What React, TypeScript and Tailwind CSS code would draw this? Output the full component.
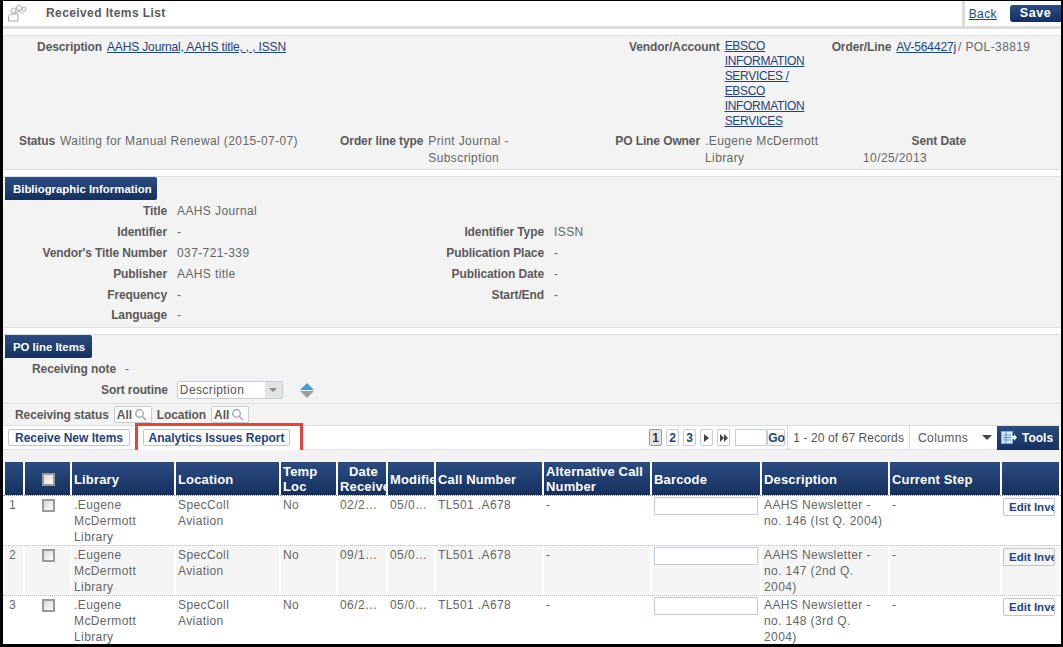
const font = { fontFamily: '"Liberation Sans", Arial, sans-serif' };

const tableCols = 'grid grid-cols-[18px_45px_102px_103px_55px_48px_46px_106px_106px_108px_126px_110px_57px] gap-x-[2px]';

const rows = [
  { n: '1', date: '02/2…', desc: ['AAHS Newsletter -', 'no. 146 (Ist Q. 2004)'] },
  { n: '2', date: '09/1…', desc: ['AAHS Newsletter -', 'no. 147 (2nd Q.', '2004)'] },
  { n: '3', date: '06/2…', desc: ['AAHS Newsletter -', 'no. 148 (3rd Q.', '2004)'] },
];

const bib = [
  ['Title', 'AAHS Journal', '', ''],
  ['Identifier', '-', 'Identifier Type', 'ISSN'],
  ["Vendor's Title Number", '037-721-339', 'Publication Place', '-'],
  ['Publisher', 'AAHS title', 'Publication Date', '-'],
  ['Frequency', '-', 'Start/End', '-'],
  ['Language', '-', '', ''],
];

const label = 'font-bold text-[#5a5a5a] tracking-[-0.1px] whitespace-nowrap';
const link = 'underline text-[#1f437c] h-fit';
const btn = 'h-[17px] border border-[#bfc6d0] rounded-[2px] text-center font-bold text-[#1f437c] leading-[16px] tracking-normal';

function Tab({ label, w }: { label: string; w: string }) {
  return (
    <div className={`${w} h-[23px] pl-[8px] flex items-center whitespace-nowrap rounded-tr-[2px] rounded-br-[2px] bg-gradient-to-b from-[#2b4c82] to-[#15305f] text-white text-[11.4px] font-bold tracking-normal`}>
      {label}
    </div>
  );
}

function SearchIcon() {
  return (
    <svg width="13" height="13" viewBox="0 0 13 13" fill="none" stroke="#8f9aa8" strokeWidth="1.2">
      <circle cx="5.5" cy="5.5" r="3.8" />
      <path d="M8.4 8.4 12 12" />
    </svg>
  );
}

function Check() {
  return <div className="w-[13px] h-[13px] border-2 border-[#9a9a9a] bg-gradient-to-br from-[#d8d8d8] to-white" />;
}

function Filter() {
  return (
    <div className="w-[38px] h-[17px] bg-white border border-[#c5ccd6] rounded-[2px] flex items-center pl-[2px] gap-[2px] font-bold text-[#5a5a5a] tracking-normal">
      All <SearchIcon />
    </div>
  );
}

function Pager({ t, active }: { t: React.ReactNode; active?: boolean }) {
  return (
    <div className={`w-[13px] h-[17px] flex items-center justify-center border rounded-[2px] text-[12px] font-bold ${active ? 'border-[#999] bg-[#e4e4e4] text-[#333]' : 'border-[#c5ccd6] bg-white text-[#1f437c]'}`}>
      {t}
    </div>
  );
}

export default function App() {
  return (
    <div style={font} className="w-[1063px] h-[647px] overflow-hidden bg-black pt-px pl-[3px] pr-[2px] pb-[3px] text-[12px] leading-[16px] tracking-[0.4px] text-[#666]">
      <div className="h-full bg-white overflow-hidden flex flex-col">
        {/* top bar */}
        <div className="h-[25px] shrink-0 flex items-center">
          <svg width="20" height="20" viewBox="0 0 20 20" fill="none" stroke="#a8a8a8" strokeWidth="1" className="ml-[4px] -mt-[2px]">
            <circle cx="12" cy="5" r="2.5" />
            <circle cx="17" cy="6" r="2" />
            <path d="M8 11c0-3 8-3 8 0M1.5 18v-4c0-2 2-3 3.500-3h6v7z" />
            <circle cx="6.500" cy="7.500" r="2.500" />
          </svg>
          <span className="ml-[19px] -mt-[2px] font-bold text-[#5a5a5a] whitespace-nowrap">Received Items List</span>
          <div className="ml-auto h-full flex items-center border-l-[3px] border-[#dcdcdc] pl-[4px]">
            <a className="underline text-[#1f437c]">Back</a>
            <div className="ml-[13px] w-[51px] h-[17px] rounded-l-[3px] bg-gradient-to-b from-[#2b4c82] to-[#15305f] text-white font-bold text-center text-[12.5px] tracking-[0.6px]">Save</div>
          </div>
        </div>
        <div className="h-[3px] shrink-0 bg-[#dcdcdc]" />

        {/* order summary */}
        <div className="mt-[6px] h-[135px] shrink-0 bg-[#f3f3f3] border-y border-[#dedede] pt-[3px]">
          <div className="flex h-[90px]">
            <b className={`w-[99px] text-right ${label}`}>Description</b>
            <a className={`ml-[5px] w-[522px] tracking-[-0.15px] ${link}`}>AAHS Journal, AAHS title, , , ISSN</a>
            <b className={label}>Vendor/Account</b>
            <a className={`ml-[5px] w-[107px] leading-[15px] tracking-[-0.3px] ${link}`}>EBSCO<br />INFORMATION<br />SERVICES /<br />EBSCO<br />INFORMATION<br />SERVICES</a>
            <b className={label}>Order/Line</b>
            <a className={`ml-[5px] tracking-[-0.15px] ${link}`}>AV-564427j</a>
            <span className="ml-[2px]">/ POL-38819</span>
          </div>
          <div className="flex mt-[4px] leading-[17px]">
            <b className={`ml-[16px] ${label}`}>Status</b>
            <span className="ml-[5px] w-[280px]">Waiting for Manual Renewal (2015-07-07)</span>
            <b className={label}>Order line type</b>
            <span className="ml-[5px] w-[187px]">Print Journal -<br />Subscription</span>
            <b className={label}>PO Line Owner</b>
            <span className="ml-[5px] w-[130px]">.Eugene McDermott Library</span>
            <div className="w-[131px] flex flex-col">
              <b className={`text-right ${label}`}>Sent Date</b>
              <span className="ml-[28px]">10/25/2013</span>
            </div>
          </div>
        </div>

        {/* bibliographic */}
        <div className="mt-[6px] h-[152px] shrink-0 bg-[#f3f3f3] border-y border-[#dedede]">
          <div className="pl-[2px]"><Tab label="Bibliographic Information" w="w-[152px]" /></div>
          <div className="mt-px grid grid-cols-[164px_247px_110px_1fr] gap-x-[10px] auto-rows-[20.8px] items-center">
            {bib.map((r) => (
              <div key={r[0]} className="contents">
                <b className={`text-right ${label}`}>{r[0]}</b>
                <span>{r[1]}</span>
                <b className={`text-right ${label}`}>{r[2]}</b>
                <span>{r[3]}</span>
              </div>
            ))}
          </div>
        </div>

        {/* PO line items */}
        <div className="mt-[6px] shrink-0 bg-[#f3f3f3] border-t border-[#dedede]">
          <div className="pl-[2px]"><Tab label="PO line Items" w="w-[87px]" /></div>
          <div className="mt-[3px] flex h-[16px] items-center">
            <b className={`ml-[29px] ${label}`}>Receiving note</b>
            <span className="ml-[9px]">-</span>
          </div>
          <div className="mt-[3px] flex h-[24px] items-center border-b border-[#dedede] pb-[3px]">
            <b className={`ml-[98px] ${label}`}>Sort routine</b>
            <div className="ml-[9px] w-[106px] h-[18px] flex bg-white border border-[#c5ccd6] rounded-[2px] text-[#555]">
              <span className="pl-[2px] flex-1 leading-[16px]">Description</span>
              <div className="w-[17px] bg-[#e4e4e4] flex items-center justify-center">
                <div className="w-0 h-0 border-x-[4px] border-t-[4px] border-x-transparent border-t-[#888]" />
              </div>
            </div>
            <div className="ml-[17px] flex flex-col gap-[1px]">
              <div className="w-0 h-0 border-x-[7px] border-b-[7px] border-x-transparent border-b-[#4a9ad4]" />
              <div className="w-0 h-0 border-x-[7px] border-t-[7px] border-x-transparent border-t-[#a0a0a0]" />
            </div>
          </div>
          <div className="h-[22px] flex items-center border-b border-[#dedede]">
            <b className={`ml-[12px] ${label}`}>Receiving status</b>
            <div className="ml-[5px]"><Filter /></div>
            <b className={`ml-[5px] ${label}`}>Location</b>
            <div className="ml-[5px]"><Filter /></div>
          </div>
        </div>

        {/* toolbar */}
        <div className="h-[24px] shrink-0 bg-white flex items-center border-b border-[#dedede]">
          <div className={`ml-[5px] w-[122px] ${btn}`}>Receive New Items</div>
          <div className="ml-[5px] w-[168px] h-[30px] border-[3px] border-[#e8433a] flex items-center pl-[5px] bg-white">
            <div className={`w-[147px] ${btn}`}>Analytics Issues Report</div>
          </div>
          <div className="ml-auto flex items-center h-full">
            <div className="flex gap-[4px] items-center">
              <Pager t="1" active />
              <Pager t="2" />
              <Pager t="3" />
              <Pager t={<div className="w-0 h-0 border-y-[4px] border-l-[5px] border-y-transparent border-l-[#444]" />} />
              <Pager t={<span className="flex"><span className="w-0 h-0 border-y-[4px] border-l-[4px] border-y-transparent border-l-[#444]" /><span className="w-0 h-0 border-y-[4px] border-l-[4px] border-y-transparent border-l-[#444]" /></span>} />
            </div>
            <div className="ml-[5px] w-[32px] h-[17px] bg-white border border-[#c5ccd6]" />
            <div className="w-[18px] h-[17px] border border-[#c5ccd6] rounded-[2px] text-center font-bold text-[#1f437c] tracking-normal">Go</div>
            <span className="border-l border-dotted border-[#bbb] ml-[2px] pl-[5px] h-full leading-[24px] text-[#555] tracking-[0.1px] whitespace-nowrap">1 - 20 of 67 Records</span>
            <span className="ml-[5px] border-l border-[#dedede] pl-[8px] w-[88px] h-full leading-[24px] text-[#555] flex items-center justify-between pr-[5px]">
              Columns <span className="w-0 h-0 border-x-[5px] border-t-[5px] border-x-transparent border-t-[#444]" />
            </span>
            <div className="mr-[2px] w-[62px] h-[24px] bg-gradient-to-b from-[#2b4c82] to-[#15305f] flex items-center pl-[4px] gap-[5px] text-white font-bold tracking-normal">
              <svg width="16" height="14" viewBox="0 0 16 14">
                <rect x="0.500" y="0.500" width="11" height="12" fill="#dbe8f6" stroke="#7fb0dc" />
                <path d="M2 4h8M2 6.500h8M2 9h8M5 1v11" stroke="#5a96cf" fill="none" />
                <path d="M11 5h2V3l3 3.500-3 3.500V8h-2z" fill="#f0f0f0" />
              </svg>
              Tools
            </div>
          </div>
        </div>
        <div className="h-[12px] shrink-0 bg-[#f3f3f3]" />

        {/* table */}
        <div className={`${tableCols} pl-[2px] h-[33px] shrink-0 text-white font-bold text-[13px] leading-[15px] tracking-[0.15px] bg-white`}>
          {['', '', 'Library', 'Location', 'Temp Loc', '', 'Modified', 'Call Number', 'Alternative Call Number', 'Barcode', 'Description', 'Current Step', ''].map((h, i) => (
            <div key={i} className="h-full bg-gradient-to-b from-[#2b4c82] to-[#15305f] pl-[2px] pt-px flex items-center overflow-hidden">
              {i === 1 ? <div className="ml-[15px]"><Check /></div> : null}
              {i === 5 ? <div className="whitespace-nowrap"><div className="pl-[9px]">Date</div><div>Received</div></div> : null}
              {i !== 1 && i !== 5 ? <span className={i === 6 ? 'whitespace-nowrap' : ''}>{h}</span> : null}
            </div>
          ))}
        </div>
        <div className="border-t border-dotted border-[#888] shrink-0" />
        {rows.map((r, i) => (
          <div key={r.n} className={`${tableCols} pl-[2px] h-[50px] shrink-0 border-b border-dotted border-[#bbb]`}>
            {[
              <div key="n" className="pl-[2px]">{r.n}</div>,
              <div key="c" className="ml-[15px] mt-[2px]"><Check /></div>,
              '.Eugene McDermott Library',
              <span key="l">SpecColl<br />Aviation</span>,
              'No',
              r.date,
              '05/0…',
              'TL501 .A678',
              '-',
              <div key="b" className="w-[104px] h-[18px] bg-white border border-[#c5ccd6]" />,
              r.desc.map((d) => <div key={d}>{d}</div>),
              '-',
              <div key="e" className="w-[52px] h-[18px] mt-px -ml-[1px] border border-[#bfc6d0] rounded-[2px] font-bold text-[#1f437c] text-[11.5px] leading-[16px] pl-[5px] overflow-hidden whitespace-nowrap tracking-normal">Edit Inve</div>,
            ].map((c, j) => (
              <div key={j} className={`pl-[2px] pt-[1px] overflow-hidden ${i === 1 ? 'bg-[#f5f5f5]' : ''}`}>{c}</div>
            ))}
          </div>
        ))}
      </div>
    </div>
  );
}
